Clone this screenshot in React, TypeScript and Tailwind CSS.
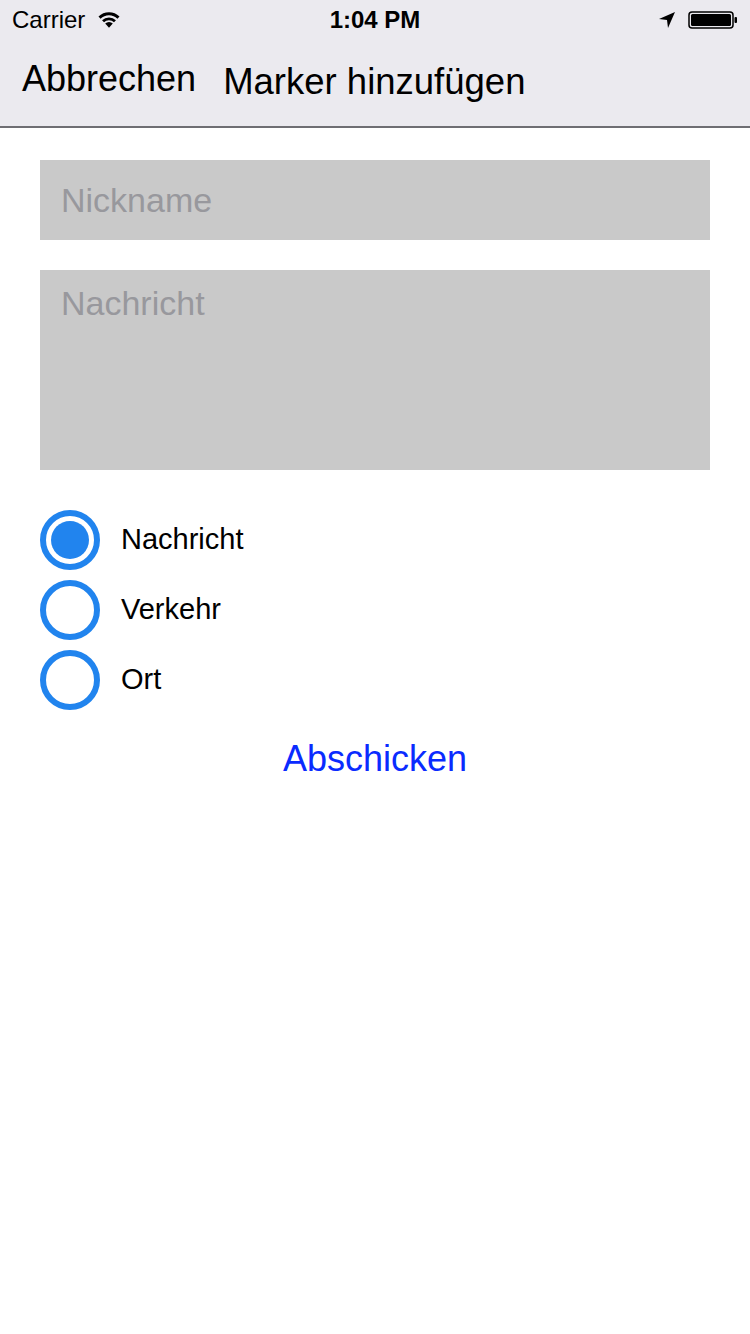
import React from "react";

function Wifi() {
  return (
    <svg width="26" height="20" viewBox="0 0 24 18">
      <path d="M12 17 L8.5 13.2 A5 5 0 0 1 15.5 13.2 Z" fill="#000" />
      <path d="M5.6 10.2 A9 9 0 0 1 18.4 10.2 L16.6 12.1 A6.4 6.4 0 0 0 7.4 12.1 Z" fill="#000" />
      <path d="M2.3 6.8 A13.6 13.6 0 0 1 21.7 6.8 L19.8 8.7 A11 11 0 0 0 4.2 8.7 Z" fill="#000" />
    </svg>
  );
}

function Arrow() {
  return (
    <svg width="18" height="18" viewBox="0 0 18 18">
      <path d="M17 1 L1 8 L9 9 L10 17 Z" fill="#000" />
    </svg>
  );
}

function Battery() {
  return (
    <svg width="50" height="18" viewBox="0 0 50 18">
      <rect x="1" y="1" width="44" height="16" rx="3" fill="none" stroke="#000" strokeWidth="1.5" />
      <rect x="3" y="3" width="40" height="12" rx="1.5" fill="#000" />
      <rect x="46.5" y="6" width="2.5" height="6" rx="1" fill="#000" />
    </svg>
  );
}

function Radio({ checked, label }: { checked?: boolean; label: string }) {
  return (
    <div className="flex items-center h-[70px]">
      <div className="w-[60px] h-[60px] rounded-full border-[6px] border-[#2184EE] flex items-center justify-center">
        {checked && <div className="w-[38px] h-[38px] rounded-full bg-[#2184EE]" />}
      </div>
      <span className="ml-[21px] text-[29px] text-black">{label}</span>
    </div>
  );
}

export default function App() {
  return (
    <div
      className="w-[750px] h-[1334px] bg-white overflow-hidden"
      style={{ fontFamily: '"Liberation Sans", Arial, sans-serif' }}
    >
      <div className="bg-[#EBEAEF] h-[128px] border-b-2 border-[#6E6E73] flex flex-col">
        <div className="h-[40px] flex items-center px-[12px] relative">
          <span className="text-[24px] text-black">Carrier</span>
          <span className="ml-[11px] mt-[-2px]"><Wifi /></span>
          <span className="absolute left-0 right-0 text-center text-[24px] font-bold text-black pointer-events-none">
            1:04 PM
          </span>
          <div className="ml-auto flex items-center gap-[12px]">
            <Arrow />
            <Battery />
          </div>
        </div>
        <div className="flex items-center h-[82px] pb-[4px]">
          <span className="ml-[22px] text-[36px] text-black">Abbrechen</span>
          <span className="ml-[27px] mt-[6px] text-[36.5px] text-black">Marker hinzufügen</span>
        </div>
      </div>

      <div className="px-[40px] pt-[32px]">
        <div className="h-[80px] bg-[#C9C9C9] flex items-center px-[21px]">
          <span className="text-[34px] text-[#98989D]">Nickname</span>
        </div>
        <div className="mt-[30px] h-[200px] bg-[#C9C9C9] px-[21px] pt-[8px]">
          <span className="text-[34px] text-[#98989D]">Nachricht</span>
        </div>

        <div className="mt-[35px] flex flex-col">
          <Radio checked label="Nachricht" />
          <Radio label="Verkehr" />
          <Radio label="Ort" />
        </div>

        <div className="mt-[17px] flex justify-center">
          <span className="text-[36px] text-[#0A2BFF]">Abschicken</span>
        </div>
      </div>
    </div>
  );
}
